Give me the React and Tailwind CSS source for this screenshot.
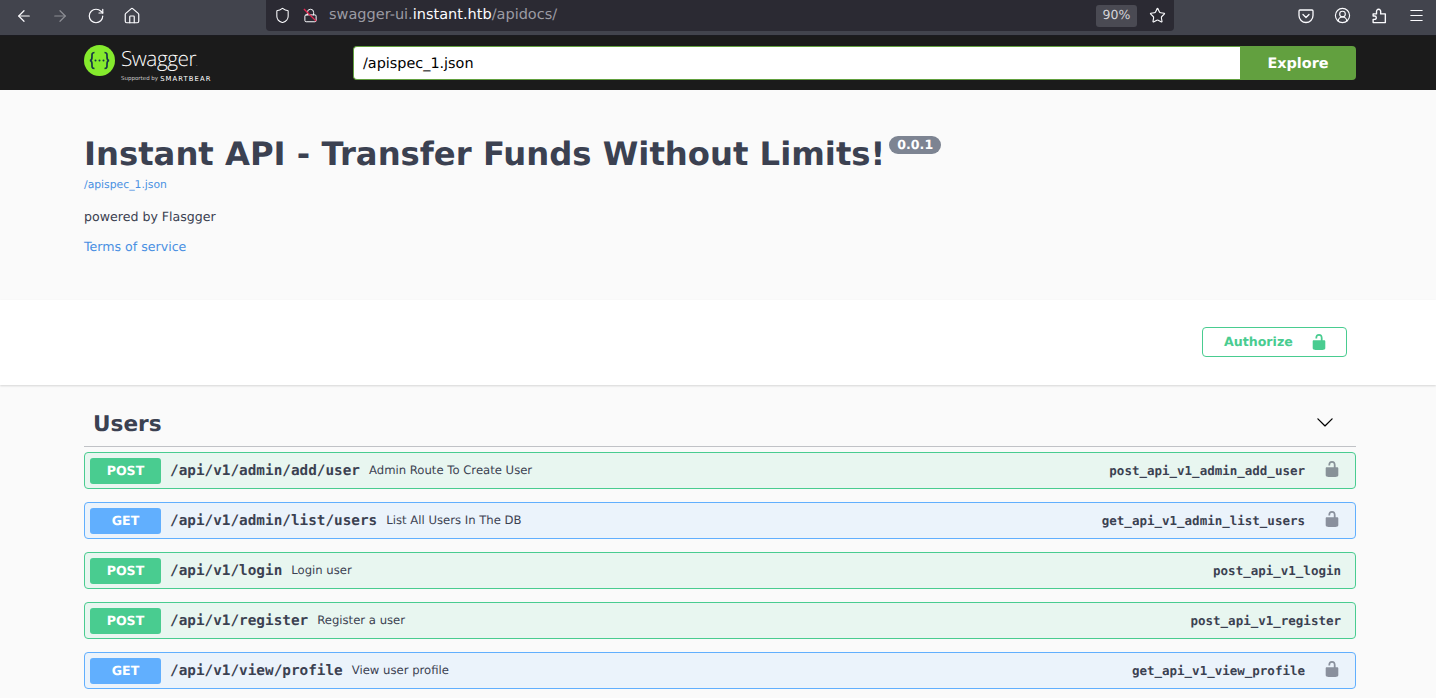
import React from 'react';
import { ArrowLeft, ArrowRight, RotateCw, Home, Shield, Lock, Star, Menu, CircleUserRound } from 'lucide-react';

const LockIcon = ({ className }) => (
  <svg viewBox="0 0 20 20" width="18" height="18" className={className} fill="currentColor">
    <path d="M15.8 8H14V5.6C14 2.703 12.665 1 10 1 7.334 1 6 2.703 6 5.6V6h2v-.801C8 3.754 8.797 3 10 3c1.203 0 2 .754 2 2.199V8H4c-.553 0-1 .646-1 1.199V17c0 .549.428 1.139.951 1.307l1.197.387C5.672 18.861 6.55 19 7.1 19h5.8c.549 0 1.428-.139 1.951-.307l1.196-.387c.524-.167.953-.757.953-1.306V9.199C17 8.646 16.352 8 15.8 8z" />
  </svg>
);

const ops = [
  { method: 'POST', path: '/api/v1/admin/add/user', desc: 'Admin Route To Create User', id: 'post_api_v1_admin_add_user', locked: true },
  { method: 'GET', path: '/api/v1/admin/list/users', desc: 'List All Users In The DB', id: 'get_api_v1_admin_list_users', locked: true },
  { method: 'POST', path: '/api/v1/login', desc: 'Login user', id: 'post_api_v1_login', locked: false },
  { method: 'POST', path: '/api/v1/register', desc: 'Register a user', id: 'post_api_v1_register', locked: false },
  { method: 'GET', path: '/api/v1/view/profile', desc: 'View user profile', id: 'get_api_v1_view_profile', locked: true },
];

const Operation = ({ method, path, desc, id, locked }) => {
  const post = method === 'POST';
  return (
    <div className={`h-[37px] shrink-0 flex items-center rounded-[4px] border pl-[5px] ${post ? 'border-[#49cc90] bg-[#e8f6f0]' : 'border-[#61affe] bg-[#ebf3fb]'}`}>
      <div className={`w-[71px] h-[26px] pt-[2px] rounded-[3px] flex items-center justify-center text-white text-[12.6px] font-bold ${post ? 'bg-[#49cc90]' : 'bg-[#61affe]'}`}>
        {method}
      </div>
      <div className="ml-[9px] pt-[2px] font-['DejaVu_Sans_Mono',monospace] font-bold text-[14.35px] text-[#3b4151]">{path}</div>
      <div className="ml-[9px] text-[11.65px] text-[#3b4151]">{desc}</div>
      <div className={`ml-auto pt-[2px] font-['DejaVu_Sans_Mono',monospace] font-bold text-[12.5px] text-[#3b4151] ${locked ? 'mr-[18px]' : 'mr-[14px]'}`}>{id}</div>
      {locked && <LockIcon className="text-[#3b4151] opacity-55 mr-[14px] -mt-[3px]" />}
    </div>
  );
};

export default function App() {
  return (
    <div className="h-[698px] overflow-hidden bg-[#fafafa] font-['DejaVu_Sans',sans-serif] [text-rendering:geometricPrecision]">
      {/* browser toolbar */}
      <div className="h-[36px] bg-[#42444d] border-b border-[#1b1b20] flex items-center pb-[4px] text-[#fbfbfe]">
        <div className="flex items-center pl-[15px] gap-[18px]">
          <ArrowLeft size={18} strokeWidth={1.6} />
          <ArrowRight size={18} strokeWidth={1.6} className="opacity-40" />
          <RotateCw size={18} strokeWidth={1.6} />
          <Home size={18} strokeWidth={1.6} />
        </div>
        <div className="ml-[125px] self-start w-[908px] h-[31px] rounded-b-[4px] bg-[#2b2a33] flex items-center pl-[8px]">
          <Shield size={17} strokeWidth={1.5} />
          <div className="relative ml-[12px]">
            <Lock size={15} strokeWidth={1.6} />
            <svg viewBox="0 0 16 16" width="15" height="15" className="absolute inset-0">
              <path d="M1 1l13 13" stroke="#e22850" strokeWidth="1.5" />
            </svg>
          </div>
          <div className="ml-[11px] text-[14.5px] text-[#9b9ba3] whitespace-nowrap">
            swagger-ui.<span className="text-[#fbfbfe]">instant.htb</span>/apidocs/
          </div>
          <div className="ml-auto w-[41px] h-[22px] rounded-[3px] bg-[#4a4a53] flex items-center justify-center text-[12.5px] text-[#d4d4d8]">90%</div>
          <Star size={17} strokeWidth={1.6} className="ml-[12px] mr-[8px]" />
        </div>
        <div className="ml-auto flex items-center gap-[20px] pr-[11px]">
          <svg viewBox="0 0 16 16" width="16" height="16" fill="none" stroke="currentColor" strokeWidth="1.3">
            <path d="M2 2h12a1 1 0 0 1 1 1v4.5a7 7 0 0 1-14 0V3a1 1 0 0 1 1-1z" />
            <path d="M5 6.5l3 3 3-3" strokeLinecap="round" strokeLinejoin="round" />
          </svg>
          <CircleUserRound size={17} strokeWidth={1.6} />
          <svg viewBox="0 0 16 16" width="17" height="17" fill="none" stroke="currentColor" strokeWidth="1.3" strokeLinejoin="round">
            <path d="M2 6.5h3.2V4.6a2 2 0 1 1 3.9 0v1.9H13.5v8.2H2v-3h1.4a1.6 1.6 0 0 0 0-3.2H2z" />
          </svg>
          <Menu size={17} strokeWidth={1.6} />
        </div>
      </div>

      {/* swagger top bar */}
      <div className="h-[54px] bg-[#1b1b1b] flex items-center pl-[84px] pr-[80px]">
        <div className="w-[269px] shrink-0 flex items-center -mt-[5px]">
          <svg viewBox="0 0 31 31" width="31" height="31">
            <circle cx="15.5" cy="15.5" r="15.5" fill="#85ea2d" />
            <path d="M10.5 7.5c-3 0-2.5 2.5-2.5 4.5 0 2-.8 3.5-2.2 3.5 1.4 0 2.2 1.5 2.2 3.5 0 2-.5 4.5 2.5 4.5M20.5 7.5c3 0 2.5 2.5 2.5 4.5 0 2 .8 3.5 2.2 3.5-1.4 0-2.2 1.5-2.2 3.5 0 2 .5 4.5-2.5 4.5" fill="none" stroke="#173647" strokeWidth="1.7" />
            <circle cx="11.5" cy="15.5" r="1" fill="#173647" />
            <circle cx="15.5" cy="15.5" r="1" fill="#173647" />
            <circle cx="19.5" cy="15.5" r="1" fill="#173647" />
          </svg>
          <div className="ml-[6px] pt-[10px] text-white">
            <div className="text-[20.8px] leading-[20px] tracking-[-0.5px] font-light font-['Open_Sans',sans-serif]">Swagger<span className="text-[6px]">.</span></div>
            <div className="flex items-center text-[5.5px] leading-[8px] mt-[1px] text-[#c8c8c8] whitespace-nowrap">
              Supported by <span className="ml-[2px] text-[6.8px] font-medium tracking-[1.1px] text-white">SMARTBEAR</span>
            </div>
          </div>
        </div>
        <div className="flex-1 h-[34px] flex">
          <div className="flex-1 bg-white border border-[#62a03f] border-r-0 rounded-l-[4px] flex items-center pl-[9px] pt-[3px] text-[14.4px] text-black">/apispec_1.json</div>
          <div className="w-[116px] bg-[#62a03f] rounded-r-[4px] flex items-center justify-center pt-[3px] text-white text-[14.4px] font-bold">Explore</div>
        </div>
      </div>

      {/* info */}
      <div className="h-[210px] pl-[84px] pr-[80px] pt-[40px] text-[#3b4151]">
        <div className="flex items-start">
          <h1 className="pt-[1px] text-[32.28px] leading-[46px] font-bold whitespace-nowrap">Instant API - Transfer Funds Without Limits!</h1>
          <span className="ml-[4px] mt-[6px] h-[18px] px-[8px] rounded-[11px] bg-[#7d8492] text-white text-[12.6px] font-bold leading-[18px]">0.0.1</span>
        </div>
        <div className="text-[10.8px] leading-[14px] text-[#4990e2] mt-[1px]">/apispec_1.json</div>
        <div className="text-[12.6px] leading-[16px] mt-[17px]">powered by Flasgger</div>
        <div className="text-[12.6px] leading-[16px] mt-[14px] text-[#4990e2]">Terms of service</div>
      </div>

      {/* scheme bar */}
      <div className="h-[85px] bg-white shadow-[0_1px_2px_rgba(0,0,0,0.15)] pl-[84px] pr-[89px] flex items-start justify-end pt-[27px]">
        <div className="w-[145px] h-[30px] border border-[#49cc90] rounded-[4px] flex items-center pl-[21px] text-[#49cc90] text-[12.6px] font-bold">
          Authorize
          <LockIcon className="ml-[17px] -mt-[1px] text-[#49cc90]" />
        </div>
      </div>

      {/* operations */}
      <div className="pl-[84px] pr-[80px]">
        <div className="h-[62px] border-b border-[#3b4151]/30 flex items-center pl-[9px] pr-[22px] pt-[20px] text-[#3b4151]">
          <span className="text-[21.6px] font-bold">Users</span>
          <svg viewBox="0 0 20 20" width="18" height="18" className="ml-auto -mt-[8px]" fill="#000">
            <path d="M17.418 6.109c.272-.268.709-.268.979 0s.271.701 0 .969l-7.908 7.83c-.27.268-.707.268-.979 0l-7.908-7.83c-.27-.268-.27-.701 0-.969.271-.268.709-.268.979 0L10 13.25l7.418-7.141z" />
          </svg>
        </div>
        <div className="mt-[5px] flex flex-col gap-[13px]">
          {ops.map((op) => (
            <Operation key={op.path} {...op} />
          ))}
        </div>
      </div>
    </div>
  );
}
